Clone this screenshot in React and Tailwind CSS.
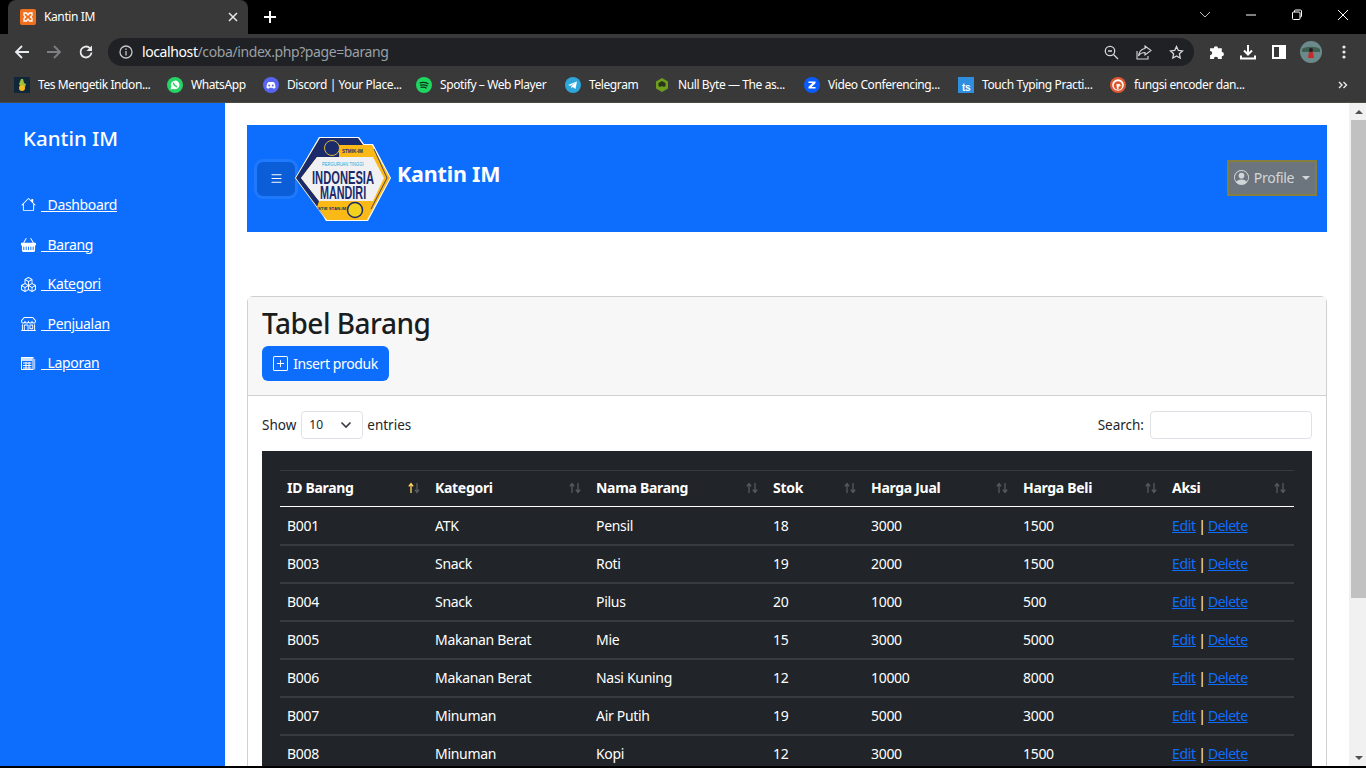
import React from 'react';
import { BsHouse, BsBasketFill, BsBoxes, BsShop, BsPlusSquare, BsPersonCircle, BsList } from 'react-icons/bs';

const FONT = { fontFamily: '"Noto Sans", sans-serif' };

const rows = [
  ['B001', 'ATK', 'Pensil', '18', '3000', '1500'],
  ['B003', 'Snack', 'Roti', '19', '2000', '1500'],
  ['B004', 'Snack', 'Pilus', '20', '1000', '500'],
  ['B005', 'Makanan Berat', 'Mie', '15', '3000', '5000'],
  ['B006', 'Makanan Berat', 'Nasi Kuning', '12', '10000', '8000'],
  ['B007', 'Minuman', 'Air Putih', '19', '5000', '3000'],
  ['B008', 'Minuman', 'Kopi', '12', '3000', '1500'],
];

const columns = [
  ['ID Barang', 'w-[148px]', true],
  ['Kategori', 'w-[161px]'],
  ['Nama Barang', 'w-[177px]'],
  ['Stok', 'w-[98px]'],
  ['Harga Jual', 'w-[152px]'],
  ['Harga Beli', 'w-[149px]'],
  ['Aksi', 'w-[129px]'],
];

// bootstrap has no icon with this exact look, so it is drawn by hand
const ReportIcon = ({ className }) => (
  <svg width="15" height="15" viewBox="0 0 15 15" className={className}>
    <rect x="0.500" y="1.500" width="11.500" height="12" fill="#0d6efd" stroke="#fff" />
    <rect x="1" y="2" width="10.500" height="3" fill="#cfe2ff" />
    <path d="M2 7h8.500M2 9.500h8.500M2 12h8.500M5 6v7M8 6v7" stroke="#fff" />
    <path d="M13.500 3v10.500" stroke="#9ec5fe" strokeWidth="1.500" />
  </svg>
);

const menu = [
  [BsHouse, 'Dashboard'],
  [BsBasketFill, 'Barang'],
  [BsBoxes, 'Kategori'],
  [BsShop, 'Penjualan'],
  [ReportIcon, 'Laporan'],
];

const Dot = ({ color, children }) => (
  <svg width="16" height="16" viewBox="0 0 16 16" className="shrink-0">
    <circle cx="8" cy="8" r="8" fill={color} />
    {children}
  </svg>
);

const bookmarks = [
  ['Tes Mengetik Indon...', 'w-[153px]', <svg width="16" height="16" viewBox="0 0 16 16" className="shrink-0"><rect width="16" height="16" fill="#10263a" /><path d="M7 2l2 0 1 4 2 1-1 3H7L5 7z" fill="#9bbf3a" /><circle cx="8" cy="11" r="3" fill="#f5b81f" /></svg>],
  ['WhatsApp', 'w-[96px]', <Dot color="#25d366"><path d="M3.500 12.500l.8-2.800A4.300 4.300 0 1 1 6.200 11.700z" fill="#fff" /><path d="M6.300 5.600c.4 2.200 1.600 3.600 3.800 4.200" fill="none" stroke="#25d366" strokeWidth="1.400" /></Dot>],
  ['Discord | Your Place...', 'w-[153px]', <Dot color="#5865f2"><path d="M3.500 10.800c0-2.700.6-4.300 1.500-5.500 1-.4 5-.4 6 0 .9 1.200 1.500 2.800 1.500 5.500-1 .7-1.700.9-2.200.9l-.7-1H6.400l-.7 1c-.5 0-1.200-.2-2.200-.9z" fill="#fff" /><circle cx="6.200" cy="8.400" r="1" fill="#5865f2" /><circle cx="9.800" cy="8.400" r="1" fill="#5865f2" /></Dot>],
  ['Spotify – Web Player', 'w-[149px]', <Dot color="#1ed760"><path d="M4 5.800c2.800-.7 5.500-.5 8 .8M4.500 8.200c2.300-.6 4.600-.4 6.700.7M5 10.400c1.900-.4 3.700-.3 5.300.6" fill="none" stroke="#10331c" strokeWidth="1.200" strokeLinecap="round" /></Dot>],
  ['Telegram', 'w-[89px]', <Dot color="#2ea6da"><path d="M3 8l9-3.500-1.500 7.500-2.700-2-1.300 1.300-.3-2.300 4-3-5 2.800z" fill="#fff" /></Dot>],
  ['Null Byte — The as...', 'w-[150px]', <svg width="16" height="16" viewBox="0 0 16 16" className="shrink-0"><path d="M8 1l6 3.500v7L8 15l-6-3.500v-7z" fill="#6f9e1e" /><path d="M4.500 6L8 4l3.500 2v3l-1.500 1-2-1-2 1-1.500-1z" fill="#26351a" /></svg>],
  ['Video Conferencing...', 'w-[154px]', <Dot color="#0b5cff"><path d="M4.500 4.500h7v1.700L7.500 10h4v1.500h-7V9.800L8.500 6h-4z" fill="#fff" /></Dot>],
  ['Touch Typing Practi...', 'w-[152px]', <svg width="16" height="16" viewBox="0 0 16 16" className="shrink-0"><rect width="16" height="16" fill="#2f8ee0" /><text x="8" y="14" textAnchor="middle" fontSize="10" fontWeight="700" fill="#fff" fontFamily="Liberation Sans, sans-serif">ts</text></svg>],
  ['fungsi encoder dan...', 'w-[135px]', <Dot color="#de5833"><circle cx="8" cy="8" r="5.800" fill="#fff" /><circle cx="8" cy="8.500" r="4.300" fill="#de5833" /><path d="M6.500 7h3.500l.5 2-2 .8v2.500H7z" fill="#fff" /><path d="M8.500 8.300l3-.6v1.800z" fill="#f5c518" /></Dot>],
];

function SortArrows({ active }) {
  return (
    <svg width="14" height="12" viewBox="0 0 14 12" className="shrink-0">
      <path d="M4 11V2M1.800 4.300L4 1.500l2.200 2.800" fill="none" stroke={active ? '#ffd75e' : '#565b61'} strokeWidth="1.300" />
      <path d="M10 1v9M7.800 7.700L10 10.500l2.200-2.800" fill="none" stroke="#565b61" strokeWidth="1.300" />
    </svg>
  );
}

function Logo() {
  const face = 'Liberation Sans, sans-serif';
  return (
    <svg width="96" height="84" viewBox="0 0 96 84" className="shrink-0">
      <polygon points="24,0 64,0 69,7 78,7 96,41 73,84 31,84 28,79 0,41" fill="#fff" />
      <polygon points="25,1 63,1 68,8 77,8 95,41 72,83 32,83 1,41" fill="#fbb917" />
      <polygon points="25,1 63,1 68,8 44,8 44,20 22,20 6,41 24,64 22,70 32,83 1,41" fill="#1b2a6b" />
      <polygon points="22,20 78,20 89,41 78,64 24,64 6,41" fill="#f1f1f3" />
      <path d="M79 12L92 41 76 72" fill="none" stroke="#1b2a6b" strokeWidth="0.800" />
      <circle cx="37" cy="11" r="7.500" fill="#1b2a6b" stroke="#d8b93a" strokeWidth="1" />
      <circle cx="60" cy="73" r="7.500" fill="#f2d21c" stroke="#1b2a6b" strokeWidth="1.500" />
      <g fontFamily={face} fill="#1b2a6b" fontWeight="700">
        <text x="47" y="16" fontSize="4.600">STMIK-IM</text>
        <text transform="translate(17 47) scale(.62 1)" fontSize="18">INDONESIA</text>
        <text transform="translate(25 62) scale(.6 1)" fontSize="18">MANDIRI</text>
        <text x="23" y="73" fontSize="4.300">STIE STAN-IM</text>
      </g>
      <text transform="translate(27 29) scale(.75 1)" fontSize="5.500" fill="#22a7d8" fontFamily={face}>PERGURUAN TINGGI</text>
    </svg>
  );
}

function BrowserChrome() {
  return (
    <div className="shrink-0 bg-black text-white">
      {/* tab strip */}
      <div className="flex h-[34px] items-end">
        <div className="ml-2 flex h-[34px] w-[240px] items-center rounded-t-lg bg-[#393939] pl-3 pr-[10px]">
          <svg width="16" height="16" viewBox="0 0 16 16" className="shrink-0">
            <rect width="16" height="16" rx="2" fill="#f1701f" />
            <path d="M4 4h2.500L8 6l1.500-2H12v2.500L10.500 8l1.500 1.500V12H9.500L8 10l-1.500 2H4V9.500L5.500 8 4 6.500z" fill="none" stroke="#fff" strokeWidth="1.300" />
          </svg>
          <span className="ml-2 flex-1 text-xs tracking-[-0.4px]">Kantin IM</span>
          <svg width="10" height="10" viewBox="0 0 10 10"><path d="M1 1l8 8M9 1l-8 8" stroke="#e8eaed" strokeWidth="1.500" /></svg>
        </div>
        <svg width="14" height="14" viewBox="0 0 14 14" className="mb-[10px] ml-[15px]"><path d="M7 1v12M1 7h12" stroke="#fff" strokeWidth="2" /></svg>
        <div className="ml-auto flex h-full items-center pb-1">
          <svg width="12" height="8" viewBox="0 0 12 8" className="mr-[34px]"><path d="M1 1l5 5 5-5" fill="none" stroke="#bdbdbd" strokeWidth="1" /></svg>
          <svg width="12" height="2" viewBox="0 0 12 2" className="mr-[34px]"><path d="M1 1h10" stroke="#fff" strokeWidth="1" /></svg>
          <svg width="12" height="12" viewBox="0 0 12 12" className="mr-[34px]"><rect x="1.500" y="3" width="7.500" height="7.500" rx="1" fill="none" stroke="#fff" /><path d="M3.500 3V2a1 1 0 0 1 1-1h5a1 1 0 0 1 1 1v5a1 1 0 0 1-1 1H9" fill="none" stroke="#fff" /></svg>
          <svg width="12" height="12" viewBox="0 0 12 12" className="mr-[17px]"><path d="M1 1l10 10M11 1L1 11" stroke="#fff" strokeWidth="1" /></svg>
        </div>
      </div>

      {/* address bar */}
      <div className="flex h-[34px] items-center bg-[#393939] pt-[2px]">
        <svg width="16" height="16" viewBox="0 0 16 16" className="ml-[14px]"><path d="M15 8H2M8 2L2 8l6 6" fill="none" stroke="#e8eaed" strokeWidth="1.800" /></svg>
        <svg width="16" height="16" viewBox="0 0 16 16" className="ml-4"><path d="M1 8h13M8 2l6 6-6 6" fill="none" stroke="#7d7f83" strokeWidth="1.800" /></svg>
        <svg width="16" height="16" viewBox="0 0 16 16" className="ml-4"><path d="M13.500 8.500a5.500 5.500 0 1 1-1.600-4.400L13.500 6" fill="none" stroke="#e8eaed" strokeWidth="1.800" /><path d="M14 1.500v5.500H8.500z" fill="#e8eaed" /></svg>
        <div className="ml-[14px] flex h-7 w-[1086px] items-center rounded-full bg-[#202124]">
          <svg width="14" height="14" viewBox="0 0 14 14" className="ml-[11px]"><circle cx="7" cy="7" r="6" fill="none" stroke="#c4c6c9" strokeWidth="1.300" /><path d="M7 6v4.500M7 3.500v1.500" stroke="#c4c6c9" strokeWidth="1.300" /></svg>
          <span className="ml-[9px] text-sm tracking-[-0.4px]"><span className="text-white">localhost</span><span className="text-[#9aa0a6]">/coba/index.php?page=barang</span></span>
          <div className="ml-auto flex items-center gap-[17px] pr-[10px]">
            <svg width="15" height="15" viewBox="0 0 15 15"><circle cx="6" cy="6" r="4.700" fill="none" stroke="#d5d7da" strokeWidth="1.300" /><path d="M9.500 9.500L14 14M4 6h4" stroke="#d5d7da" strokeWidth="1.300" /></svg>
            <svg width="16" height="15" viewBox="0 0 16 15"><path d="M9 1l6 4.500L9 10V7.500C6 7.500 4 8.500 2.500 11 3 7 5.500 4 9 3.500z" fill="none" stroke="#d5d7da" strokeWidth="1.100" /><path d="M1 6v8h11v-3" fill="none" stroke="#d5d7da" strokeWidth="1.100" /></svg>
            <svg width="15" height="15" viewBox="0 0 15 15"><path d="M7.500 1.500l1.800 3.900 4.200.5-3.100 2.900.8 4.200-3.700-2.100L3.800 13l.8-4.200L1.500 5.900l4.200-.5z" fill="none" stroke="#d5d7da" strokeWidth="1.300" /></svg>
          </div>
        </div>
        <div className="ml-[15px] flex items-center">
          <svg width="16" height="16" viewBox="0 0 15 15"><path d="M1 4h3.500a2 2 0 1 1 4 0H12v3.500a2 2 0 1 1 0 4V14H8.500a2 2 0 1 0-4 0H1v-3.500a2 2 0 1 0 0-4z" fill="#fff" /></svg>
          <svg width="16" height="16" viewBox="0 0 16 16" className="ml-[15px]"><path d="M8 1v9M4 6.500L8 10.500l4-4" fill="none" stroke="#fff" strokeWidth="2" /><path d="M1 11.500V14.500H15V11.500" fill="none" stroke="#fff" strokeWidth="2" /></svg>
          <svg width="14" height="14" viewBox="0 0 14 14" className="ml-4"><rect x="1" y="1" width="12" height="12" fill="none" stroke="#fff" strokeWidth="2" /><rect x="7" y="1" width="6" height="12" fill="#fff" /></svg>
          <svg width="22" height="22" viewBox="0 0 22 22" className="ml-[14px]"><circle cx="11" cy="11" r="11" fill="#6b8a8a" /><path d="M2 8c4-3 14-3 18 0v3H2z" fill="#3f5f52" /><path d="M9 11h4l1 6H8z" fill="#c62b2b" /><circle cx="11" cy="9" r="2" fill="#2a1c1c" /></svg>
          <svg width="4" height="14" viewBox="0 0 4 14" className="ml-[20px]"><circle cx="2" cy="2" r="1.600" fill="#e8eaed" /><circle cx="2" cy="7" r="1.600" fill="#e8eaed" /><circle cx="2" cy="12" r="1.600" fill="#e8eaed" /></svg>
        </div>
      </div>

      {/* bookmarks bar */}
      <div className="flex h-[35px] items-center border-b border-[#4a4a42] bg-[#393939] pl-[14px]">
        {bookmarks.map(([label, width, icon]) => (
          <div key={label} className={`${width} flex items-center gap-2 text-xs tracking-[-0.4px]`}>
            {icon}
            <span className="whitespace-nowrap">{label}</span>
          </div>
        ))}
        <svg width="10" height="8" viewBox="0 0 10 8" className="ml-auto mr-[18px]"><path d="M1 1l3 3-3 3M5.500 1l3 3-3 3" fill="none" stroke="#e8eaed" strokeWidth="1.400" /></svg>
      </div>
    </div>
  );
}

export default function App() {
  return (
    <div className="flex h-[768px] w-[1366px] flex-col overflow-hidden bg-white" style={FONT}>
      <BrowserChrome />

      <div className="flex min-h-0 flex-1">
        {/* sidebar */}
        <aside className="w-[225px] shrink-0 bg-[#0d6efd] text-white">
          <h2 className="ml-[23px] mt-[20px] text-[20.500px] leading-[30px] font-medium">Kantin IM</h2>
          <ul className="ml-[21px] mt-[41.700px] flex flex-col gap-[19px]">
            {menu.map(([Icon, label]) => (
              <li key={label} className="flex h-[20.600px] items-center text-sm tracking-[-0.35px]">
                <Icon className="text-[15px]" />
                <a href="#" className="ml-[5px] whitespace-pre underline">{'  ' + label}</a>
              </li>
            ))}
          </ul>
        </aside>

        {/* page content */}
        <main className="min-w-0 flex-1 px-[22px] pt-[22px]">
          <nav className="flex h-[107px] items-center bg-[#0d6efd] px-[10px]">
            <button className="flex h-[34px] w-[38px] items-center justify-center rounded-md bg-[#0b5ed7] text-white shadow-[0_0_0_3px_rgba(49,132,253,0.5)]">
              <BsList className="text-[15px]" />
            </button>
            <Logo />
            <span className="mb-[8px] ml-[6px] text-[21.500px] font-bold tracking-[-0.2px] text-white">Kantin IM</span>
            <button className="mb-[2px] ml-auto flex h-[36px] w-[90px] items-center justify-center border-2 border-[#857f3d] bg-[#6c757d] text-sm tracking-[-0.3px] text-[#d3d6d9]">
              <BsPersonCircle className="mr-[5px] text-[15px]" />
              Profile
              <span className="ml-2 border-x-4 border-t-4 border-x-transparent border-t-[#d3d6d9]" />
            </button>
          </nav>

          <section className="mt-[64px] rounded-md border border-[#d0d0d0]">
            <div className="h-[99px] border-b border-[#d0d0d0] bg-[#f7f7f7] px-[14px]">
              <h1 className="pt-[7px] text-[28px] leading-[38px] font-medium tracking-[-0.5px] text-[#1a1d20]">Tabel Barang</h1>
              <button className="mt-[4px] flex h-[35px] w-[127px] items-center justify-center rounded-md bg-[#0d6efd] text-sm tracking-[-0.4px] text-white">
                <BsPlusSquare className="mr-[5px] text-[15px]" />
                Insert produk
              </button>
            </div>

            <div className="px-[14px] pt-[15px]">
              <div className="flex h-[28px] items-center text-[13.500px] text-[#212529]">
                <span>Show</span>
                <div className="ml-[5px] flex h-[28px] w-[62px] items-center justify-between rounded border border-[#dee2e6] pl-[7px] pr-[10px] text-xs">
                  10
                  <svg width="12" height="8" viewBox="0 0 12 8"><path d="M1.500 1.500L6 6l4.500-4.500" fill="none" stroke="#343a40" strokeWidth="1.600" /></svg>
                </div>
                <span className="ml-1">entries</span>
                <span className="ml-auto">Search:</span>
                <div className="ml-[6px] h-[28px] w-[162px] rounded border border-[#dee2e6]" />
              </div>

              <div className="mt-[12px] bg-[#212529] px-[18px] pt-[19px] pb-4">
                <table className="w-[1014px] table-fixed border-collapse text-sm tracking-[-0.3px] text-white">
                  <thead>
                    <tr className="h-[36px] border-t border-b border-t-[#373b3e] border-b-white">
                      {columns.map(([name, width, active]) => (
                        <th key={name} className={`${width} px-[7px] pb-[2px] text-left font-bold`}>
                          <div className="flex items-center justify-between">
                            <span>{name}</span>
                            <SortArrows active={active} />
                          </div>
                        </th>
                      ))}
                    </tr>
                  </thead>
                  <tbody>
                    {rows.map((row) => (
                      <tr key={row[0]} className="h-[38px] border-b-2 border-[#373b3e] [&:first-child>td]:pt-[2px]">
                        {row.map((cell, i) => (
                          <td key={i} className="px-[7px]">{cell}</td>
                        ))}
                        <td className="px-[7px]">
                          <a href="#" className="text-[#0d6efd] underline">Edit</a>
                          <span className="mx-[-1px]"> | </span>
                          <a href="#" className="tracking-[-0.5px] text-[#0d6efd] underline">Delete</a>
                        </td>
                      </tr>
                    ))}
                  </tbody>
                </table>
              </div>
            </div>
          </section>
        </main>

        {/* scrollbar */}
        <div className="flex w-[17px] shrink-0 flex-col items-end bg-[#f1f1f1]">
          <div className="flex h-[17px] w-[15px] items-center justify-center"><span className="border-x-4 border-b-4 border-x-transparent border-b-[#505050]" /></div>
          <div className="h-[478px] w-[15px] bg-[#c1c1c1]" />
          <div className="mt-auto flex h-[17px] w-[15px] items-center justify-center"><span className="border-x-4 border-t-4 border-x-transparent border-t-[#505050]" /></div>
        </div>
      </div>
      <div className="h-[2px] shrink-0 bg-black" />
    </div>
  );
}
